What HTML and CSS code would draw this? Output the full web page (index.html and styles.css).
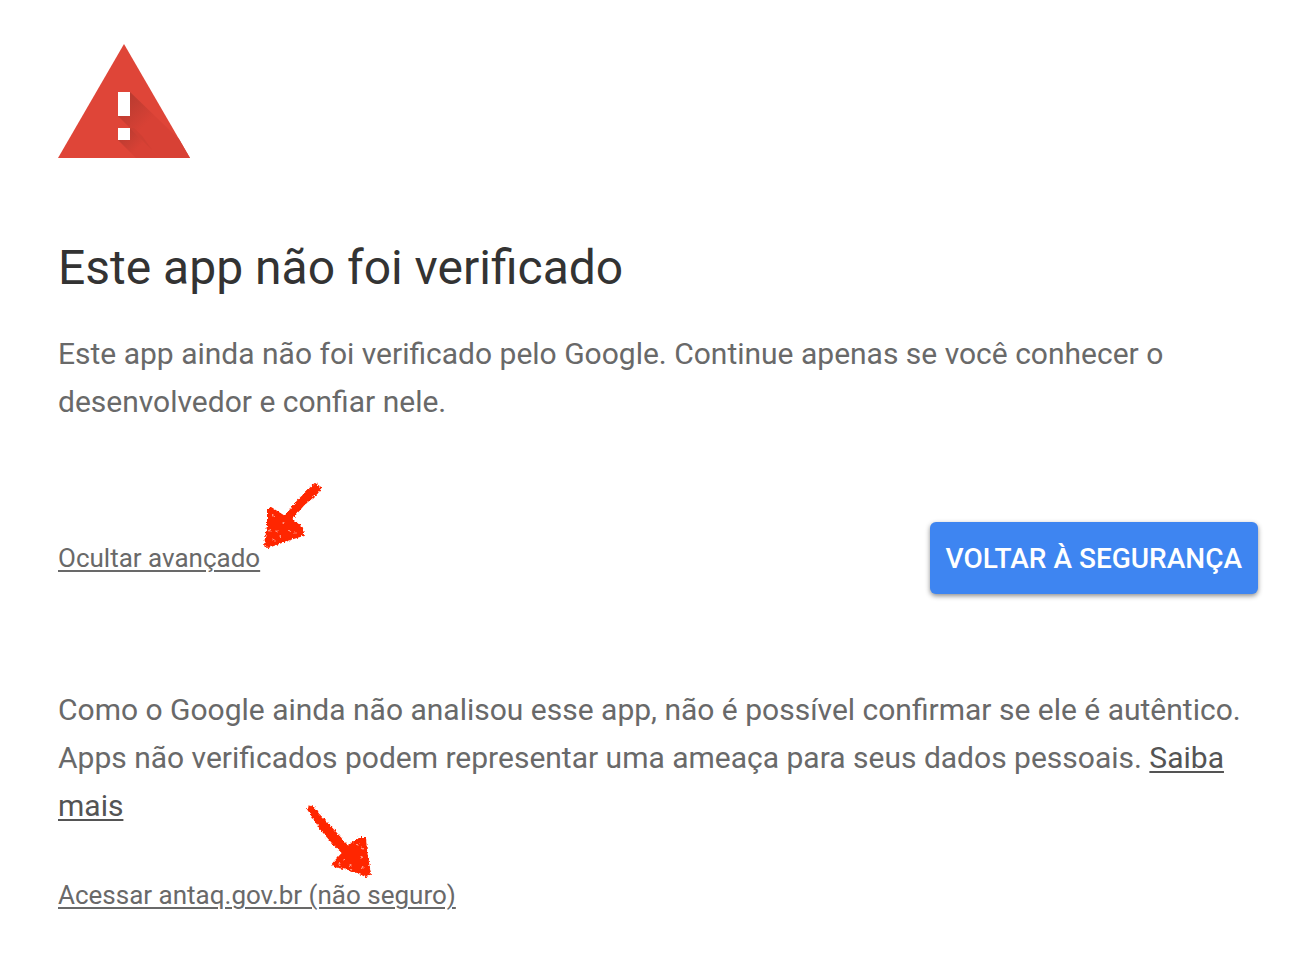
FILE: index.html
```
<!DOCTYPE html>
<html lang="pt-BR">
<head>
<meta charset="utf-8">
<title>Este app não foi verificado</title>
<link rel="stylesheet" href="styles.css">
</head>
<body>
<main class="interstitial">
  <svg class="warning-icon" viewBox="0 0 132 114" role="img" aria-label="Aviso">
    <defs>
      <linearGradient id="shade-bar" gradientUnits="userSpaceOnUse" x1="60" y1="62" x2="83" y2="85">
        <stop offset="0" stop-color="#b93b30"/>
        <stop offset="1" stop-color="#d84135"/>
      </linearGradient>
      <linearGradient id="shade-dot" gradientUnits="userSpaceOnUse" x1="66" y1="86" x2="82" y2="102">
        <stop offset="0" stop-color="#b93b30"/>
        <stop offset="1" stop-color="#d84135"/>
      </linearGradient>
    </defs>
    <path d="M66 0 132 114H0Z" fill="#df4538"/>
    <path d="M72 48 121 95 132 114H102L60 72Z" fill="url(#shade-bar)"/>
    <path d="M72 84 102 114H78L60 96Z" fill="url(#shade-dot)"/>
    <path d="M72 84 84 96 94 106 84 92 76 84Z" fill="#c63d32" opacity="0.5"/>
    <path d="M60 48h12v24H60zM60 84h12v12H60z" fill="#fff"/>
  </svg>

  <h1 class="title">Este app não foi verificado</h1>
  <p class="text">Este app ainda não foi verificado pelo Google. Continue apenas se você conhecer o desenvolvedor e confiar nele.</p>

  <div class="actions">
    <div class="marked">
      <a class="small-link" href="#details">Ocultar avançado</a>
      <svg class="arrow arrow-toggle" viewBox="0 0 85 80" aria-hidden="true">
        <defs>
          <filter id="chalk" x="-10%" y="-10%" width="120%" height="120%">
            <feTurbulence type="fractalNoise" baseFrequency="0.45" numOctaves="2" seed="4"/>
            <feDisplacementMap in="SourceGraphic" scale="4" xChannelSelector="R" yChannelSelector="G"/>
          </filter>
        </defs>
        <g filter="url(#chalk)">
          <path class="ink" d="M65 9 71 13 65 20 54 29 41 44 52 53 53 60 37 65 18 72 15 70 18 51 18 35 21 33 35 42 48 26Z"/>
          <path class="gap" d="M23 40v1M33 48h1M26 56h1M30 61h1M39 56h1M45 58h1M23 65h1M20 55v1"/>
        </g>
      </svg>
    </div>
    <button class="safety-button" type="button">VOLTAR À SEGURANÇA</button>
  </div>

  <section class="details" id="details">
    <p class="text">Como o Google ainda não analisou esse app, não é possível confirmar se ele é autêntico. Apps não verificados podem representar uma ameaça para seus dados pessoais. <a class="learn-more" href="#saiba-mais">Saiba mais</a></p>
    <div class="marked">
      <a class="small-link" href="#acessar">Acessar antaq.gov.br (não seguro)</a>
      <svg class="arrow arrow-proceed" viewBox="0 0 85 90" aria-hidden="true">
        <g filter="url(#chalk)">
          <path class="ink" d="M13 14 17 11 24 20 38 35 53 52 64 43 70 43 71 56 75 79 71 81 58 75 39 71 38 69 48 58 40 50 26 34Z"/>
          <path class="gap" d="M63 49v1M67 53v1M49 65h1M44 69h1M66 62v1M67 73h1M55 70h1"/>
        </g>
      </svg>
    </div>
  </section>
</main>
</body>
</html>
```
FILE: styles.css
```
* {
  box-sizing: border-box;
}

body {
  margin: 0;
  background: #fff;
  color: #696969;
  font-family: Roboto, "Liberation Sans", sans-serif;
  font-size: 30px;
  line-height: 48px;
}

.interstitial {
  padding: 44px 42px 48px 58px;
}

.warning-icon {
  display: block;
  width: 132px;
  height: 114px;
}

.title {
  margin: 82px 0 34px;
  color: #333;
  font-size: 48px;
  font-weight: 400;
  line-height: 56px;
}

.text {
  margin: 0;
}

.actions {
  display: flex;
  align-items: center;
  justify-content: space-between;
  margin-top: 96px;
}

.marked {
  position: relative;
  width: fit-content;
}

.small-link {
  display: block;
  color: #696969;
  font-size: 26px;
  line-height: 50px;
  text-underline-offset: 3px;
  text-decoration-thickness: 2px;
}

.learn-more {
  color: #545454;
  text-underline-offset: 3px;
  text-decoration-thickness: 2px;
}

.safety-button {
  height: 72px;
  padding: 0 16px;
  border: 0;
  border-radius: 6px;
  background: #3e85f1;
  box-shadow: 0 2px 5px rgba(0, 0, 0, 0.45);
  color: #fff;
  font-family: inherit;
  font-size: 28px;
  font-weight: 500;
  cursor: pointer;
}

.details {
  margin-top: 92px;
}

.details .marked {
  margin-top: 40px;
}

.arrow {
  position: absolute;
  pointer-events: none;
}

.arrow-toggle {
  top: -58px;
  left: 192px;
  width: 85px;
  height: 80px;
}

.arrow-proceed {
  top: -75px;
  left: 237px;
  width: 85px;
  height: 90px;
}

.ink {
  fill: #ff2600;
  stroke: #ff2600;
  stroke-width: 2;
  stroke-linejoin: round;
}

.gap {
  fill: none;
  stroke: #fff;
  stroke-width: 1;
  stroke-linecap: round;
}
```
